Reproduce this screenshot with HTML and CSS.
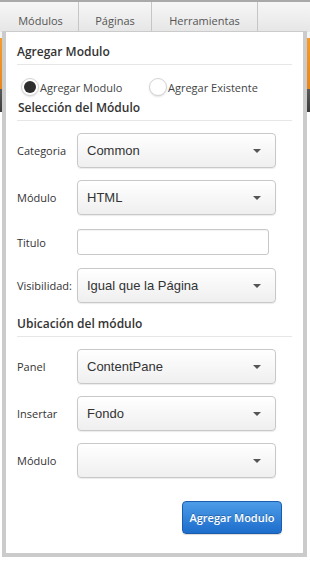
FILE: index.html
```html
<!DOCTYPE html>
<html lang="es">

<head>
    <meta charset="UTF-8">
    <meta name="viewport" content="width=device-width, initial-scale=1.0">
    <title>Agregar Modulo</title>
    <link rel="stylesheet" href="styles.css">
</head>

<body>
    <!-- barra de pestañas -->
    <div class="tabbar">
        <div class="tab">Módulos</div>
        <div class="tab">Páginas</div>
        <div class="tab">Herramientas</div>
        <div class="tab tab-empty"></div>
    </div>

    <!-- contenido de la página detrás del panel -->
    <div class="page">
        <div class="page-orange"></div>
        <div class="page-dark"></div>
        <div class="page-body"></div>
    </div>

    <!-- panel desplegable -->
    <div class="panel">
        <div class="panel-title">Agregar Modulo</div>
        <div class="rule"></div>

        <div class="radios">
            <label class="radio"><span class="radio-dot checked"></span>Agregar Modulo</label>
            <label class="radio"><span class="radio-dot"></span>Agregar Existente</label>
        </div>

        <div class="panel-title sub">Selección del Módulo</div>
        <div class="rule"></div>

        <div class="field first">
            <span class="field-label">Categoria</span>
            <div class="dropdown">Common<span class="caret"></span></div>
        </div>
        <div class="field">
            <span class="field-label">Módulo</span>
            <div class="dropdown">HTML<span class="caret"></span></div>
        </div>
        <div class="field field-input">
            <span class="field-label">Titulo</span>
            <div class="text-input"></div>
        </div>
        <div class="field">
            <span class="field-label">Visibilidad:</span>
            <div class="dropdown">Igual que la Página<span class="caret"></span></div>
        </div>

        <div class="panel-title sub2">Ubicación del módulo</div>
        <div class="rule"></div>

        <div class="field first">
            <span class="field-label">Panel</span>
            <div class="dropdown">ContentPane<span class="caret"></span></div>
        </div>
        <div class="field">
            <span class="field-label">Insertar</span>
            <div class="dropdown">Fondo<span class="caret"></span></div>
        </div>
        <div class="field">
            <span class="field-label">Módulo</span>
            <div class="dropdown"><span class="caret"></span></div>
        </div>

        <div class="actions">
            <button class="btn-primary">Agregar Modulo</button>
        </div>
    </div>
</body>

</html>
```

FILE: styles.css
```css
/* global */
body {
    margin: 0;
    padding: 0;
    font-family: "Open Sans", "DejaVu Sans", sans-serif;
    background-color: #f4f4f4;
    color: #333;
    overflow: hidden;
    height: 561px;
    position: relative;
}

/* pestañas */
.tabbar {
    display: flex;
    height: 30px;
    border-top: 2px solid #a9a9a9;
    background: linear-gradient(to bottom, #f6f6f6, #e6e6e6);
    padding-left: 3px;
}

.tab {
    width: 75px;
    border-right: 1px solid #c6c6c6;
    font-size: 11px;
    color: #555;
    text-align: center;
    line-height: 38px;
}

.tab:nth-child(2) {
    width: 72px;
}

.tab:nth-child(3) {
    width: 105px;
}

.tab-empty {
    flex: 1;
    border-right: none;
}

/* página de fondo */
.page-orange {
    height: 51px;
    margin-top: 6px;
    background: linear-gradient(to bottom, #f59b2b, #e8861c);
}

.page-dark {
    height: 23px;
    background: linear-gradient(to bottom, #5a5a5a, #3c3c3c);
}

.page-body {
    height: 450px;
    background: #fff;
}

/* panel */
.panel {
    position: absolute;
    top: 31px;
    left: 2px;
    width: 275px;
    height: 490px;
    padding: 12px 11px 19px;
    background: #fff;
    border: 4px solid #cbcbcb;
    border-top-width: 1px;
}

.panel-title {
    font-size: 12px;
    font-weight: 600;
    line-height: 16px;
    color: #333;
}

.panel-title.sub {
    margin-top: 4px;
    padding-left: 1px;
}

.panel-title.sub2 {
    margin-top: 13px;
}

.rule {
    height: 1px;
    background: #e6e6e6;
    margin-top: 4px;
}

/* radios */
.radios {
    display: flex;
    margin-top: 13px;
    height: 18px;
    align-items: center;
    font-size: 11px;
    color: #444;
}

.radio {
    display: flex;
    align-items: center;
    width: 124px;
    padding-left: 4px;
}

.radio-dot {
    width: 18px;
    height: 18px;
    border-radius: 50%;
    border: 1px solid #d4d4d4;
    background: #fff;
    box-shadow: 0 1px 2px rgba(0, 0, 0, 0.12);
    box-sizing: border-box;
    margin-right: 1px;
    position: relative;
}

.radio-dot.checked::after {
    content: "";
    position: absolute;
    left: 2px;
    top: 2px;
    width: 12px;
    height: 12px;
    border-radius: 50%;
    background: #2e2e2e;
}

/* filas del formulario */
.field {
    display: grid;
    grid-template-columns: 60px 199px;
    align-items: center;
    margin-top: 12px;
}

.field.first {
    margin-top: 12px;
}

.field.field-input {
    margin-top: 14px;
}

.field.field-input + .field {
    margin-top: 13px;
}

.field-label {
    font-size: 11px;
    color: #333;
}

.dropdown {
    position: relative;
    height: 33px;
    line-height: 33px;
    padding-left: 9px;
    border: 1px solid #c8c8c8;
    border-radius: 4px;
    background: linear-gradient(to bottom, #ffffff, #efefef);
    box-shadow: 0 1px 1px rgba(0, 0, 0, 0.08);
    font-family: "Liberation Sans", Arial, sans-serif;
    font-size: 13px;
    color: #333;
}

.caret {
    position: absolute;
    right: 14px;
    top: 15px;
    width: 0;
    height: 0;
    border-left: 4px solid transparent;
    border-right: 4px solid transparent;
    border-top: 4px solid #555;
}

.text-input {
    width: 190px;
    height: 24px;
    border: 1px solid #c8c8c8;
    border-radius: 3px;
    background: #fff;
    box-shadow: inset 0 1px 1px rgba(0, 0, 0, 0.05);
}

/* botón */
.actions {
    display: flex;
    justify-content: flex-end;
    margin-top: 23px;
    padding-right: 10px;
}

.btn-primary {
    width: 100px;
    height: 33px;
    border: 1px solid #1b5dac;
    border-radius: 4px;
    background: linear-gradient(to bottom, #4c9ce8, #1d6dcc);
    color: #fff;
    font-family: "Open Sans", "DejaVu Sans", sans-serif;
    font-size: 11px;
    font-weight: 600;
    padding: 0;
    text-shadow: 0 -1px 0 rgba(0, 0, 0, 0.25);
    box-shadow: 0 1px 1px rgba(0, 0, 0, 0.15);
}
```
